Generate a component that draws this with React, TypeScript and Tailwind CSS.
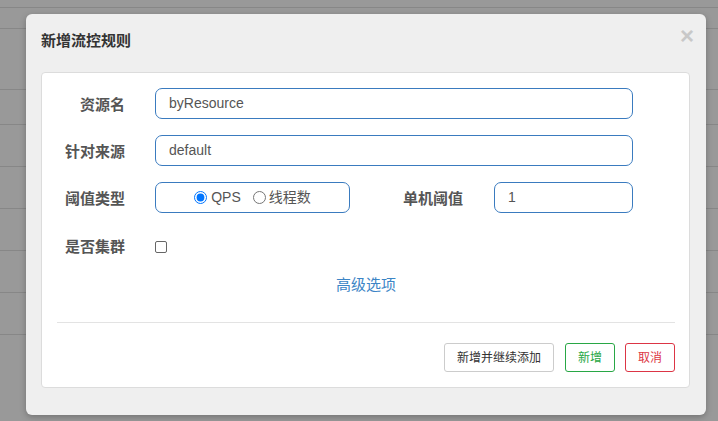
import React from "react";

const cjk = { fontFamily: '"Liberation Sans", Arial, "Noto Sans CJK SC", sans-serif' };

export default function App() {
  const lineGaps = [7, 20, 60, 34, 41, 41, 41, 41, 41];
  return (
    <div className="relative h-[421px] w-[718px] overflow-hidden bg-[#999999]" style={cjk}>
      <div className="flex flex-col">
        {lineGaps.map((g, i) => (
          <div key={i} className="h-px w-full bg-[#878787]" style={{ marginTop: g }} />
        ))}
      </div>

      <div className="absolute left-[26px] top-[14px] h-[401px] w-[680px] rounded-[6px] bg-[#efefef] shadow-[0_2px_6px_rgba(0,0,0,0.25)]">
        <div className="relative flex h-[58px] items-start pl-[15px] pt-[17px]">
          <span className="text-[15px] font-bold leading-[20px] text-[#333333]">新增流控规则</span>
          <span className="absolute right-[12px] top-[8px] text-[24px] font-bold leading-[28px] text-[#c8c8c8]">×</span>
        </div>

        <div className="ml-[15px] mt-0 w-[649px] rounded-[4px] border border-[#dcdcdc] bg-white pb-[15px] pl-[15px] pr-[14px] pt-[15px]">
          <div className="flex flex-col">
            <Row label="资源名">
              <TextBox value="byResource" width="w-[478px]" />
            </Row>
            <div className="mt-[16px]">
              <Row label="针对来源">
                <TextBox value="default" width="w-[478px]" />
              </Row>
            </div>
            <div className="mt-[16px] flex h-[31px] items-center">
              <Label text="阈值类型" />
              <div className="ml-[30px] flex h-[31px] w-[195px] items-center justify-center rounded-[7px] border border-[#3a7bbf] text-[14px] text-[#555555]">
                <input type="radio" defaultChecked name="t" className="m-0 h-[13px] w-[13px]" />
                <span className="ml-[4px]">QPS</span>
                <input type="radio" name="t" className="m-0 ml-[12px] h-[13px] w-[13px]" />
                <span className="ml-[3px]">线程数</span>
              </div>
              <div className="w-[113px] pt-[4px] text-right text-[15px] font-bold text-[#555555]">单机阈值</div>
              <div className="ml-[31px]">
                <TextBox value="1" width="w-[139px]" />
              </div>
            </div>
            <div className="mt-[17px] flex h-[31px] items-center">
              <Label text="是否集群" />
              <div className="ml-[30px] mt-[2px] h-[12px] w-[12px] rounded-[2px] border border-[#666666] bg-white" />
            </div>
            <div className="mt-[14px] flex justify-center">
              <span className="text-[15px] leading-[20px] text-[#3c85c6]">高级选项</span>
            </div>
            <div className="mt-[27px] h-px w-full bg-[#e3e3e3]" />
            <div className="mt-[20px] flex justify-end gap-[10px]">
              <button className="mr-px h-[29px] rounded-[3px] border border-[#cccccc] bg-white px-[12px] text-[12px] text-[#333333]">新增并继续添加</button>
              <button className="h-[29px] rounded-[3px] border border-[#28a745] bg-white px-[12px] text-[12px] text-[#28a745]">新增</button>
              <button className="h-[29px] rounded-[3px] border border-[#dc3545] bg-white px-[12px] text-[12px] text-[#dc3545]">取消</button>
            </div>
          </div>
        </div>
      </div>
    </div>
  );
}

function Label({ text }: { text: string }) {
  return <div className="w-[68px] pt-[4px] text-right text-[15px] font-bold text-[#555555]">{text}</div>;
}

function Row({ label, children }: { label: string; children: React.ReactNode }) {
  return (
    <div className="flex h-[31px] items-center">
      <Label text={label} />
      <div className="ml-[30px]">{children}</div>
    </div>
  );
}

function TextBox({ value, width }: { value: string; width: string }) {
  return (
    <div className={`flex h-[31px] ${width} items-center rounded-[7px] border border-[#3a7bbf] bg-white pl-[13px] text-[14px] text-[#555555]`}>
      {value}
    </div>
  );
}
